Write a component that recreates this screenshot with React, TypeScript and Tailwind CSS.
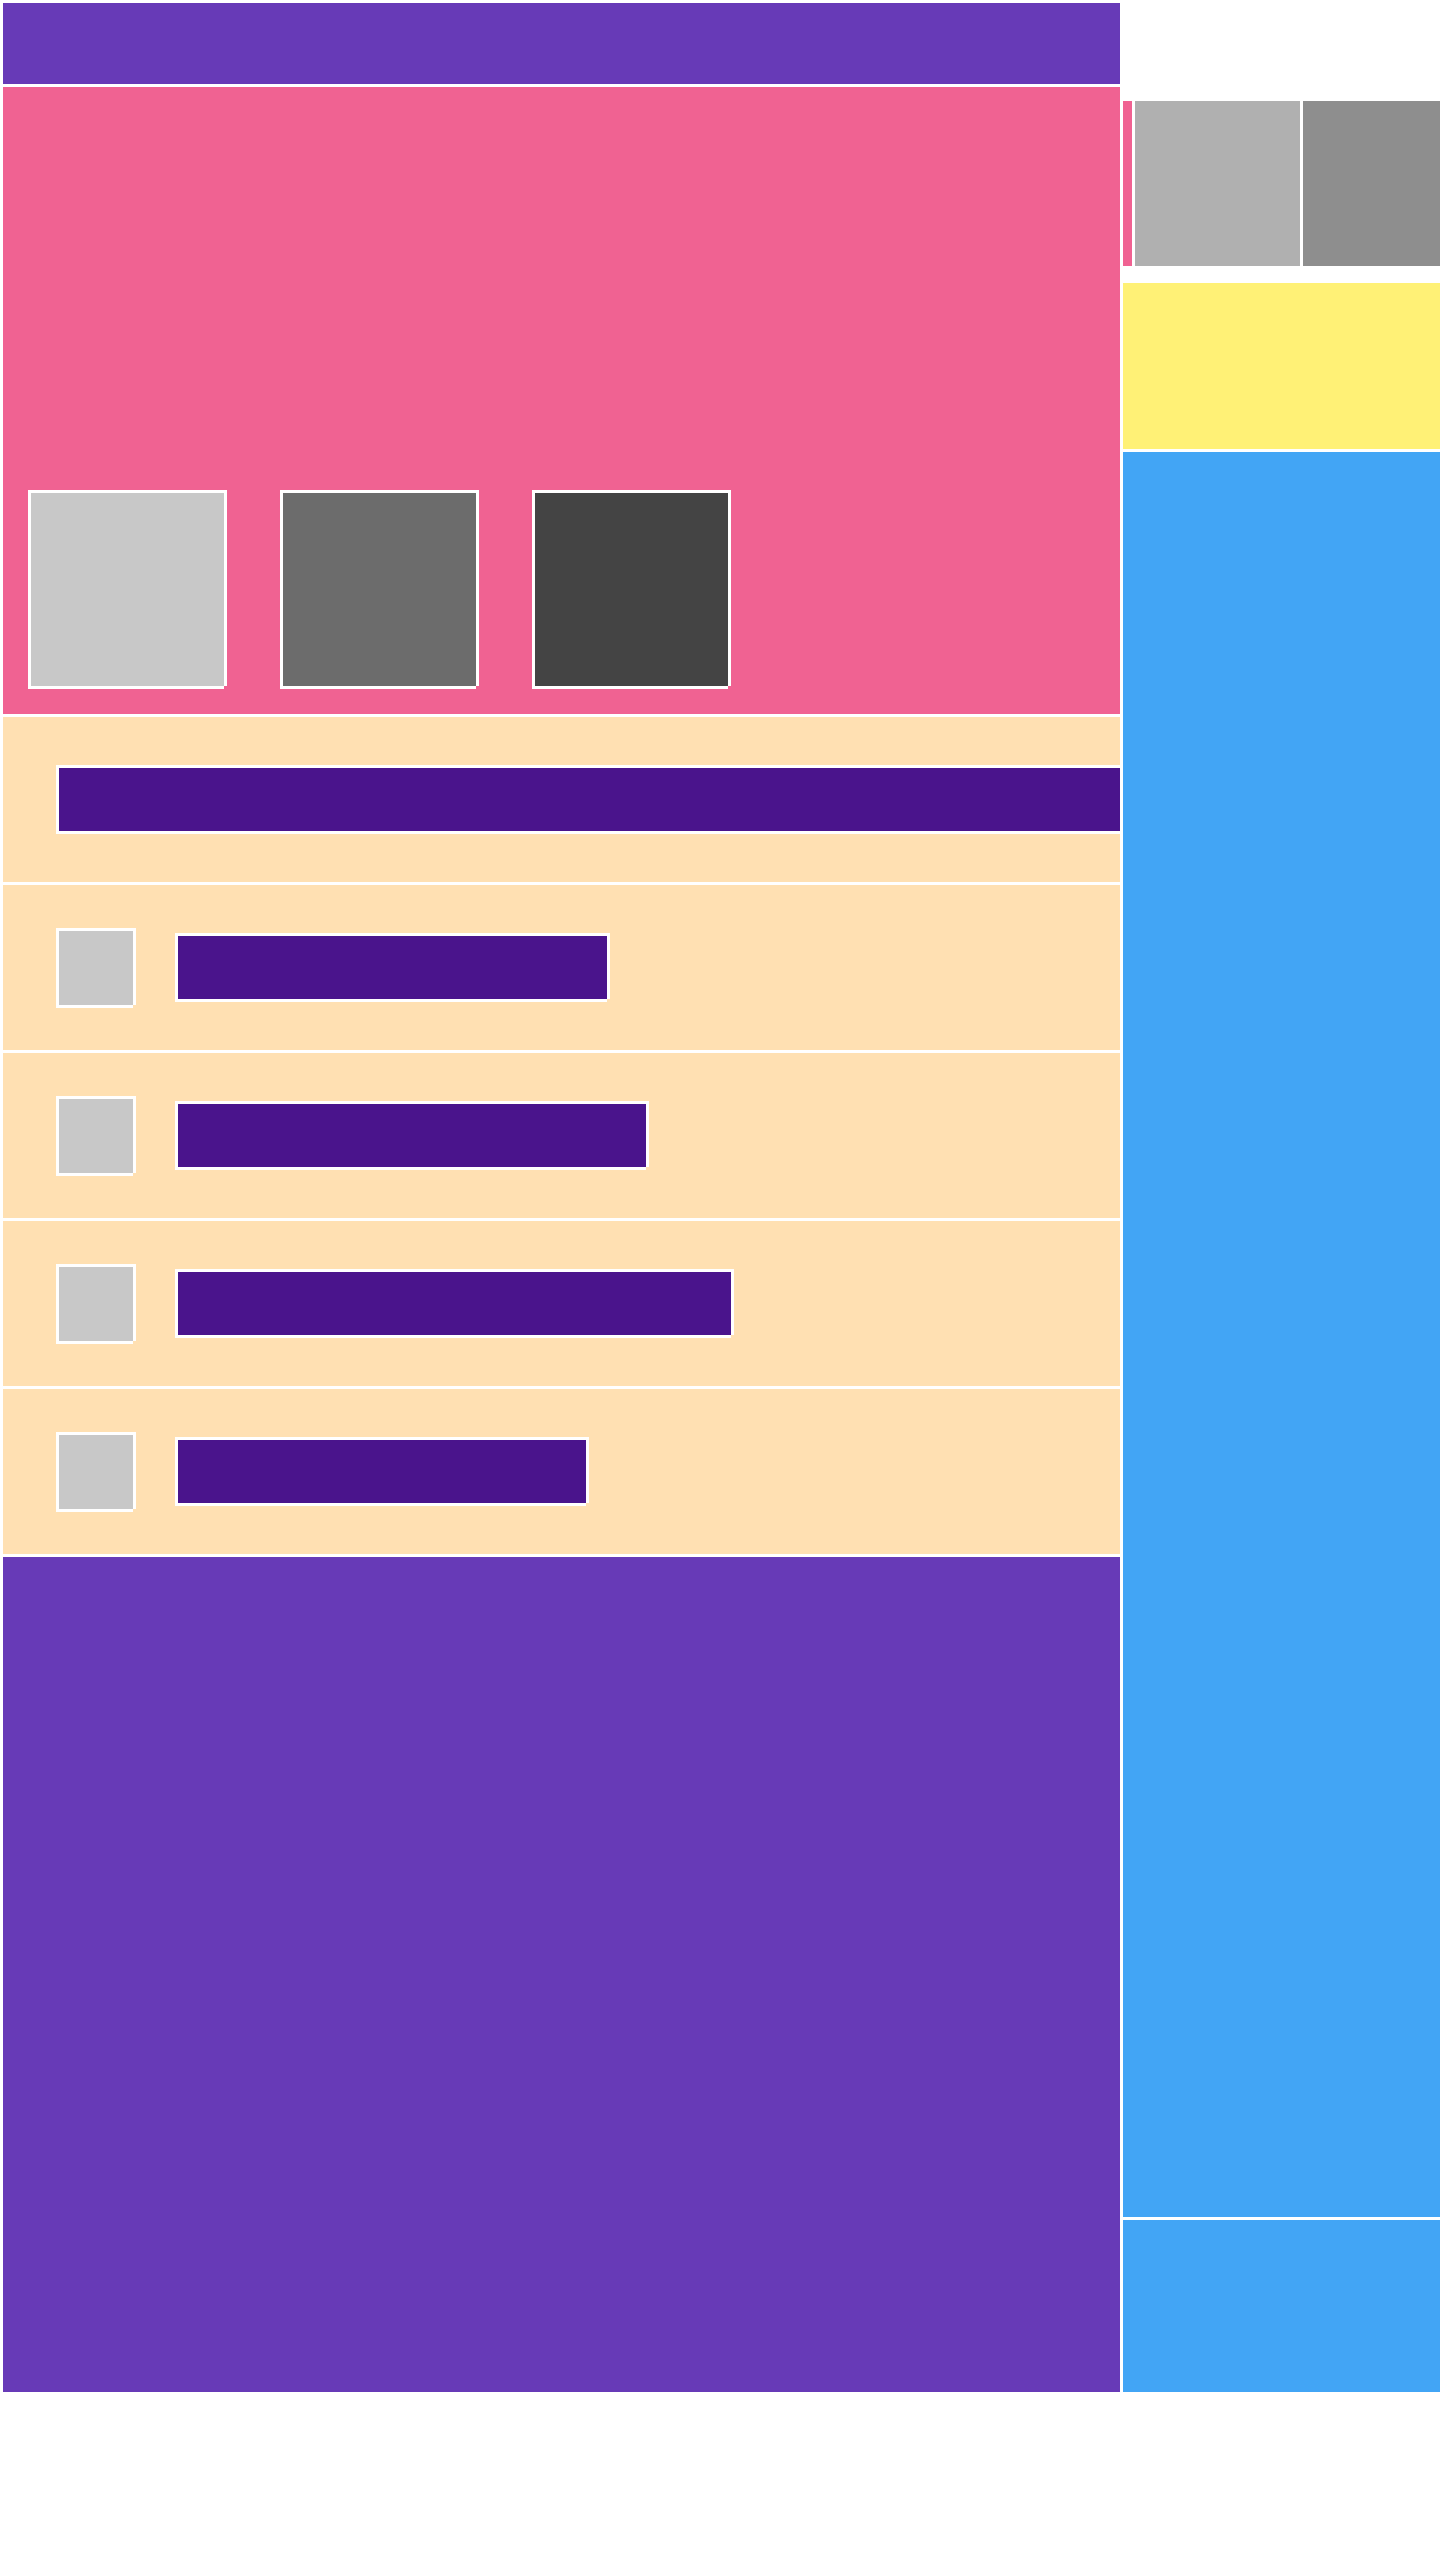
// App.tsx
const outline =
  "shadow-[-3px_-3px_0_0_#fff,0_-3px_0_0_#fff,3px_-3px_0_0_#fff,-3px_0_0_0_#fff,3px_0_0_0_#fff,-3px_3px_0_0_#fff,0_3px_0_0_#fff]";

const rows = [
  { w: "w-[429px]" },
  { w: "w-[468px]" },
  { w: "w-[553px]" },
  { w: "w-[408px]" },
];

export default function App() {
  return (
    <div className="min-h-[2560px] bg-white font-['Liberation_Sans',sans-serif]">
      <div className="flex gap-[3px] pl-[3px] pt-[3px]">
        {/* main column */}
        <div className="flex w-[1117px] flex-col gap-[3px]">
          <header className="h-[81px] bg-[#673ab7]" />

          <section className="flex h-[627px] items-end gap-[59px] bg-[#f06292] pb-[28px] pl-[28px]">
            <div className={`h-[193px] w-[193px] bg-[#c8c8c8] ${outline}`} />
            <div className={`h-[193px] w-[193px] bg-[#6c6c6c] ${outline}`} />
            <div className={`h-[193px] w-[193px] bg-[#444444] ${outline}`} />
          </section>

          <div className="flex h-[165px] items-center bg-[#ffe0b2] pl-[56px]">
            <div className={`h-[63px] flex-1 bg-[#4a148c] ${outline}`} />
          </div>

          {rows.map((r, i) => (
            <div key={i} className="flex h-[165px] items-center gap-[45px] bg-[#ffe0b2] pl-[56px]">
              <div className={`h-[74px] w-[74px] bg-[#c8c8c8] ${outline}`} />
              <div className={`h-[63px] bg-[#4a148c] ${r.w} ${outline}`} />
            </div>
          ))}

          <footer className="h-[835px] bg-[#673ab7]" />
        </div>

        {/* side column */}
        <aside className="flex w-[317px] flex-col pt-[98px]">
          <div className="flex h-[165px] gap-[3px] overflow-hidden">
            <div className="h-full w-[9px] shrink-0 bg-[#f06292]" />
            <div className="h-full w-[165px] shrink-0 bg-[#b0b0b0]" />
            <div className="h-full w-[165px] shrink-0 bg-[#8e8e8e]" />
          </div>
          <div className="mt-[17px] h-[166px] bg-[#fff176]" />
          <div className="mt-[3px] h-[1765px] bg-[#42a5f5]" />
          <div className="mt-[3px] h-[172px] bg-[#42a5f5]" />
        </aside>
      </div>
    </div>
  );
}
